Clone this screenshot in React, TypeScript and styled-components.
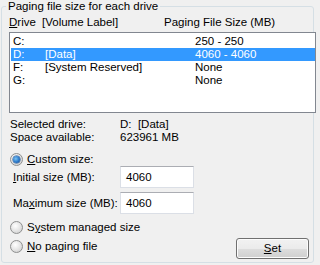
import React from "react";
import styled, { createGlobalStyle } from "styled-components";

const Global = createGlobalStyle`
  html, body { margin: 0; padding: 0; background: #f0f0f0; overflow: hidden; }
  body { font-family: "Liberation Sans", Arial, sans-serif; font-size: 11.5px; color: #000; }
  * { box-sizing: border-box; }
`;

const Group = styled.fieldset`
  margin: 0 0 0 1px;
  padding: 0;
  width: 313px;
  height: 263px;
  min-width: 0;
  border: 1px solid #d5dfe5;
  border-radius: 3px;
  display: flex;
  flex-direction: column;
`;

const Legend = styled.legend`
  margin-left: 4px;
  padding: 0 2px;
  line-height: 13px;
  height: 13px;
`;

const HeaderRow = styled.div`
  margin: 2px 0 0 7px;
  height: 14px;
  line-height: 14px;
  display: grid;
  grid-template-columns: 33px 122px 1fr;
  white-space: nowrap;
`;

const List = styled.div`
  margin: 3px -3px 0 7px;
  height: 81px;
  background: #fff;
  border: 1px solid #828790;
  padding: 2px 0 0 1px;
`;

const Row = styled.div<{ $selected?: boolean }>`
  height: 13px;
  line-height: 13px;
  display: grid;
  grid-template-columns: 32px 150px 1fr;
  padding-left: 2px;
  white-space: nowrap;
  background: ${(p) => (p.$selected ? "#3399ff" : "transparent")};
  color: ${(p) => (p.$selected ? "#fff" : "#000")};
`;

const Info = styled.div`
  margin: 5px 0 0 8px;
  display: grid;
  grid-template-columns: 110px 1fr;
  line-height: 13px;
  white-space: nowrap;
`;

const RadioRow = styled.label<{ $mt: number }>`
  margin: ${(p) => p.$mt}px 0 0 8px;
  display: flex;
  align-items: center;
  gap: 4px;
  height: 13px;
  line-height: 13px;
  white-space: nowrap;
`;

const RadioDot = styled.span<{ $checked?: boolean }>`
  width: 13px;
  height: 13px;
  border-radius: 50%;
  border: 1px solid #8e8f8f;
  background: radial-gradient(circle at 40% 35%, #ffffff 0%, #e8e8e8 45%, #c9c9c9 100%);
  display: flex;
  align-items: center;
  justify-content: center;
  flex: none;
  &::after {
    content: "";
    display: ${(p) => (p.$checked ? "block" : "none")};
    width: 7px;
    height: 7px;
    border-radius: 50%;
    background: radial-gradient(circle at 40% 40%, #7cc4f4 0%, #2a78c8 55%, #0f3f86 100%);
    box-shadow: 0 0 0 0.5px #1b4f8f;
  }
`;

const FieldRow = styled.div<{ $mt: number }>`
  margin: ${(p) => p.$mt}px 0 0 11px;
  display: grid;
  grid-template-columns: 107px 74px;
  align-items: center;
  white-space: nowrap;
`;

const TextBox = styled.div`
  height: 22px;
  background: #fff;
  border: 1px solid #dbdfe6;
  border-top-color: #abadb3;
  padding: 3px 0 0 5px;
  line-height: 14px;
`;

const BottomRow = styled.div`
  margin: 4px 0 0 0;
  display: flex;
  justify-content: space-between;
  align-items: flex-start;
  padding-right: 4px;
`;

const Button = styled.div`
  width: 73px;
  height: 21px;
  border: 1px solid #707070;
  border-radius: 3px;
  box-shadow: inset 0 0 0 1px #fcfcfc;
  background: linear-gradient(#f2f2f2 0%, #ebebeb 50%, #dddddd 51%, #cfcfcf 100%);
  display: flex;
  align-items: center;
  justify-content: center;
  line-height: 13px;
`;

const U = styled.span`
  text-decoration: underline;
  text-underline-offset: 1px;
`;

const drives = [
  { d: "C:", l: "", s: "250 - 250" },
  { d: "D:", l: "[Data]", s: "4060 - 4060", sel: true },
  { d: "F:", l: "[System Reserved]", s: "None" },
  { d: "G:", l: "", s: "None" },
];

export default function App() {
  return (
    <>
      <Global />
      <Group>
        <Legend>Paging file size for each drive</Legend>
        <HeaderRow>
          <span>
            <U>D</U>rive
          </span>
          <span>[Volume Label]</span>
          <span>Paging File Size (MB)</span>
        </HeaderRow>
        <List>
          {drives.map((r) => (
            <Row key={r.d} $selected={r.sel}>
              <span>{r.d}</span>
              <span>{r.l}</span>
              <span>{r.s}</span>
            </Row>
          ))}
        </List>
        <Info>
          <span>Selected drive:</span>
          <span>D:&nbsp;&nbsp;[Data]</span>
          <span>Space available:</span>
          <span>623961 MB</span>
        </Info>
        <RadioRow $mt={9}>
          <RadioDot $checked />
          <span>
            <U>C</U>ustom size:
          </span>
        </RadioRow>
        <FieldRow $mt={0}>
          <span>
            <U>I</U>nitial size (MB):
          </span>
          <TextBox>4060</TextBox>
        </FieldRow>
        <FieldRow $mt={4}>
          <span>
            Ma<U>x</U>imum size (MB):
          </span>
          <TextBox>4060</TextBox>
        </FieldRow>
        <RadioRow $mt={7}>
          <RadioDot />
          <span>
            S<U>y</U>stem managed size
          </span>
        </RadioRow>
        <BottomRow>
          <RadioRow $mt={2}>
            <RadioDot />
            <span>
              <U>N</U>o paging file
            </span>
          </RadioRow>
          <Button>
            <span>
              <U>S</U>et
            </span>
          </Button>
        </BottomRow>
      </Group>
    </>
  );
}
